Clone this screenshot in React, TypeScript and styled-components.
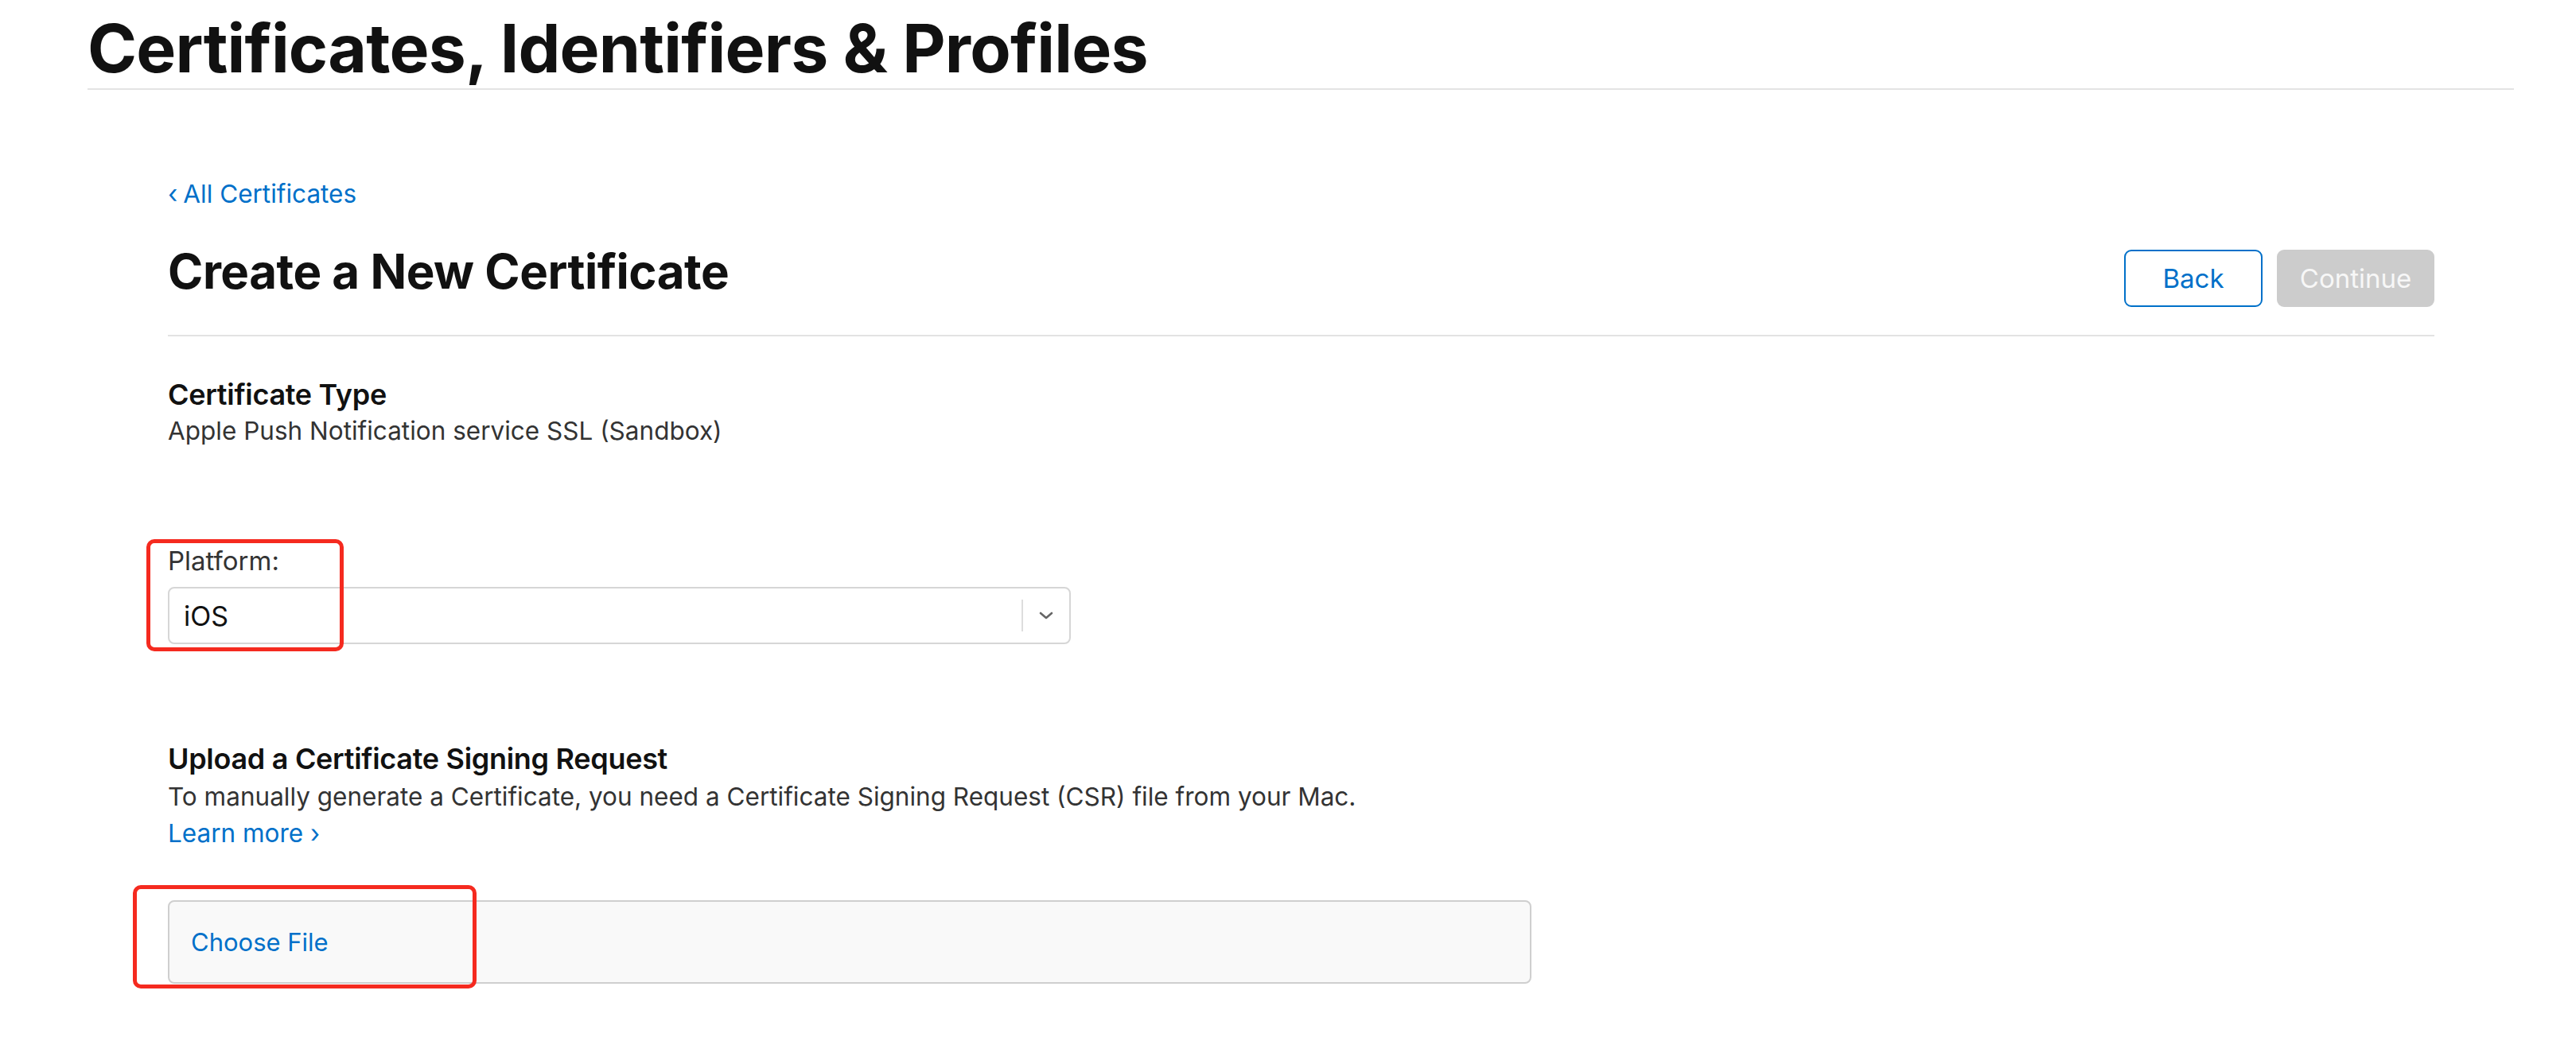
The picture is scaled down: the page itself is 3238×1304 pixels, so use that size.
import React from "react";
import styled, { createGlobalStyle } from "styled-components";

const GlobalStyle = createGlobalStyle`
  html, body {
    margin: 0;
    padding: 0;
    background: #ffffff;
  }
  body {
    font-family: Inter, "Liberation Sans", Arial, sans-serif;
    color: #333333;
    -webkit-font-smoothing: antialiased;
  }
`;

const Page = styled.div`
  width: 3238px;
  min-height: 1304px;
  background: #fff;
`;

const Header = styled.header`
  margin-left: 110px;
  width: 3050px;
  padding-top: 15px;
  padding-bottom: 4px;
  border-bottom: 2px solid #e3e3e3;
`;

const SiteTitle = styled.h1`
  margin: 0;
  font-size: 84px;
  line-height: 92px;
  font-weight: 700;
  letter-spacing: -0.8px;
  color: #111111;
`;

const Main = styled.main`
  margin-left: 211px;
  width: 2849px;
  padding-top: 111px;
`;

const BackLink = styled.a`
  display: inline-flex;
  align-items: center;
  gap: 7px;
  font-size: 31.5px;
  line-height: 40px;
  color: #0070c9;
  text-decoration: none;
`;

const Chevron = styled.span`
  font-size: 32px;
  line-height: 40px;
`;

const HeadingRow = styled.div`
  display: flex;
  justify-content: space-between;
  align-items: flex-start;
  margin-top: 50px;
  padding-bottom: 35px;
  border-bottom: 2px solid #e3e3e3;
`;

const PageTitle = styled.h2`
  margin: 0;
  font-size: 60px;
  line-height: 54px;
  font-weight: 700;
  letter-spacing: -0.5px;
  color: #111111;
`;

const ButtonGroup = styled.div`
  display: flex;
  gap: 18px;
`;

const Button = styled.button<{ $variant: "outline" | "disabled" }>`
  height: 72px;
  padding: 0;
  width: ${(p) => (p.$variant === "outline" ? "174px" : "198px")};
  border-radius: 9px;
  font-family: Inter, "Liberation Sans", Arial, sans-serif;
  font-size: 33px;
  font-weight: 400;
  cursor: pointer;
  border: 2px solid
    ${(p) => (p.$variant === "outline" ? "#0070c9" : "#cccccc")};
  background: ${(p) => (p.$variant === "outline" ? "#ffffff" : "#cccccc")};
  color: ${(p) => (p.$variant === "outline" ? "#0070c9" : "#f7f7f7")};
`;

const Section = styled.section<{ $gap: number }>`
  margin-top: ${(p) => p.$gap}px;
`;

const SectionTitle = styled.h3`
  margin: 0;
  font-size: 36px;
  line-height: 46px;
  font-weight: 600;
  letter-spacing: -0.3px;
  color: #111111;
`;

const BodyText = styled.p`
  margin: 3px 0 0;
  font-size: 31.5px;
  line-height: 44px;
  color: #333333;
`;

const TypeText = styled(BodyText)`
  margin-top: 0;
  line-height: 46px;
`;

const FieldGroup = styled.div`
  position: relative;
  width: 1135px;
`;

const Label = styled.label`
  display: block;
  font-size: 33px;
  line-height: 44px;
  color: #333333;
`;

const Select = styled.div`
  margin-top: 11px;
  height: 72px;
  box-sizing: border-box;
  border: 2px solid #d6d6d6;
  border-radius: 8px;
  display: flex;
  align-items: center;
  background: #fff;
`;

const SelectValue = styled.span`
  flex: 1;
  padding-left: 18px;
  font-size: 34px;
  color: #111111;
`;

const SelectDivider = styled.span`
  width: 2px;
  height: 40px;
  background: #dddddd;
`;

const SelectArrow = styled.span`
  width: 58px;
  display: flex;
  justify-content: center;
  align-items: center;
`;

const Annotation = styled.div<{
  $left: number;
  $top: number;
  $w: number;
  $h: number;
}>`
  position: absolute;
  left: ${(p) => p.$left}px;
  top: ${(p) => p.$top}px;
  width: ${(p) => p.$w}px;
  height: ${(p) => p.$h}px;
  box-sizing: border-box;
  border: 5px solid #f52a1f;
  border-radius: 10px;
  pointer-events: none;
`;

const LearnMore = styled.a`
  display: block;
  margin-top: 2px;
  font-size: 31.5px;
  line-height: 44px;
  color: #0070c9;
  text-decoration: none;
`;

const FileBox = styled.div`
  position: relative;
  margin-top: 62px;
  width: 1714px;
  height: 105px;
  box-sizing: border-box;
  background: #f9f9f9;
  border: 2px solid #cfcfcf;
  border-radius: 8px;
  display: flex;
  align-items: center;
  padding-left: 27px;
`;

const FileButton = styled.span`
  font-size: 31px;
  color: #0070c9;
`;

export default function App() {
  return (
    <Page>
      <GlobalStyle />
      <Header>
        <SiteTitle>Certificates, Identifiers &amp; Profiles</SiteTitle>
      </Header>
      <Main>
        <BackLink href="#">
          <Chevron>‹</Chevron>
          All Certificates
        </BackLink>
        <HeadingRow>
          <PageTitle>Create a New Certificate</PageTitle>
          <ButtonGroup>
            <Button $variant="outline">Back</Button>
            <Button $variant="disabled">Continue</Button>
          </ButtonGroup>
        </HeadingRow>

        <Section $gap={50}>
          <SectionTitle>Certificate Type</SectionTitle>
          <TypeText>Apple Push Notification service SSL (Sandbox)</TypeText>
        </Section>

        <Section $gap={118}>
          <FieldGroup>
            <Label>Platform:</Label>
            <Select>
              <SelectValue>iOS</SelectValue>
              <SelectDivider />
              <SelectArrow>
                <svg width="20" height="12" viewBox="0 0 20 12">
                  <path
                    d="M3 3 L10 9 L17 3"
                    fill="none"
                    stroke="#666"
                    strokeWidth="2.6"
                    strokeLinecap="round"
                    strokeLinejoin="round"
                  />
                </svg>
              </SelectArrow>
            </Select>
            <Annotation $left={-27} $top={-5} $w={248} $h={141} />
          </FieldGroup>
        </Section>

        <Section $gap={121}>
          <SectionTitle>Upload a Certificate Signing Request</SectionTitle>
          <BodyText>
            To manually generate a Certificate, you need a Certificate Signing
            Request (CSR) file from your Mac.
          </BodyText>
          <LearnMore href="#">Learn more ›</LearnMore>
          <FileBox>
            <FileButton>Choose File</FileButton>
            <Annotation $left={-46} $top={-21} $w={432} $h={130} />
          </FileBox>
        </Section>
      </Main>
    </Page>
  );
}
